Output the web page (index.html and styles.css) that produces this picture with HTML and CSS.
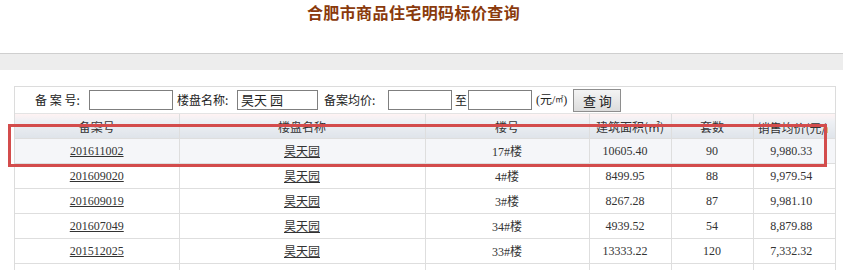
FILE: index.html
```html
<!DOCTYPE html>
<html lang="zh-CN">
<head>
<meta charset="utf-8">
<title>合肥市商品住宅明码标价查询</title>
<link rel="stylesheet" href="styles.css">
</head>
<body>
<div class="title">合肥市商品住宅明码标价查询</div>
<div class="band"></div>
<div class="panel">
  <div class="search">
    <span class="lbl lbl1">备 案 号:</span>
    <span class="inp inp1"></span>
    <span class="lbl lbl2">楼盘名称:</span>
    <span class="inp inp2">昊天 园</span>
    <span class="lbl lbl3">备案均价:</span>
    <span class="inp inp3"></span>
    <span class="lbl lbl4">至</span>
    <span class="inp inp4"></span>
    <span class="lbl unit">(元/<small>㎡</small>)</span>
    <span class="btn">查 询</span>
  </div>
  <table class="grid">
    <colgroup>
      <col class="c1"><col class="c2"><col class="c3"><col class="c4"><col class="c5"><col class="c6">
    </colgroup>
    <thead>
      <tr><th>备案号</th><th>楼盘名称</th><th>楼号</th><th>建筑面积(㎡)</th><th>套数</th><th class="clip"><span>销售均价(元/㎡)</span></th></tr>
    </thead>
    <tbody>
      <tr class="hl"><td><a href="#">201611002</a></td><td><a href="#">昊天园</a></td><td>17#楼</td><td class="num">10605.40</td><td>90</td><td class="num2">9,980.33</td></tr>
      <tr><td><a href="#">201609020</a></td><td><a href="#">昊天园</a></td><td>4#楼</td><td class="num">8499.95</td><td>88</td><td class="num2">9,979.54</td></tr>
      <tr><td><a href="#">201609019</a></td><td><a href="#">昊天园</a></td><td>3#楼</td><td class="num">8267.28</td><td>87</td><td class="num2">9,981.10</td></tr>
      <tr><td><a href="#">201607049</a></td><td><a href="#">昊天园</a></td><td>34#楼</td><td class="num">4939.52</td><td>54</td><td class="num2">8,879.88</td></tr>
      <tr><td><a href="#">201512025</a></td><td><a href="#">昊天园</a></td><td>33#楼</td><td class="num">13333.22</td><td>120</td><td class="num2">7,332.32</td></tr>
      <tr><td></td><td></td><td></td><td></td><td></td><td></td></tr>
    </tbody>
  </table>
</div>
<div class="mark"></div>
</body>
</html>
```
FILE: styles.css
```css
html, body {
  margin: 0;
  padding: 0;
  background: #fff;
  overflow: hidden;
}
body {
  width: 843px;
  height: 270px;
  position: relative;
  font-family: "Liberation Serif", "Noto Sans CJK SC", serif;
  font-size: 12px;
  color: #333;
}
.title {
  height: 53px;
  box-sizing: border-box;
  padding: 2px 16px 0 0;
  text-align: center;
  font-family: "Noto Sans CJK SC", sans-serif;
  font-weight: bold;
  font-size: 16px;
  line-height: 20px;
  color: #8a3a0c;
  letter-spacing: 0.4px;
}
.band {
  height: 16px;
  border-top: 1px solid #cfcfcf;
  background: #ededed;
}
.panel {
  margin: 16px 0 0 14px;
  width: 822px;
  box-sizing: border-box;
  border: 1px solid #dcdcdc;
  border-bottom: none;
}
.search {
  height: 26px;
  display: flex;
  align-items: center;
  border-bottom: 1px solid #e4e4e4;
  font-family: "Noto Sans CJK SC", sans-serif;
  font-size: 12px;
  color: #222;
}
.lbl { white-space: nowrap; line-height: 16px; }
.lbl1 { margin-left: 20px; width: 54px; }
.lbl2 { margin-left: 4px; width: 60px; }
.lbl3 { margin-left: 6px; width: 64px; }
.lbl4 { margin-left: 3px; width: 13px; }
.unit { margin-left: 4px; font-family: "Liberation Serif", "Noto Sans CJK SC", serif; font-size: 12px; }
.unit small { font-size: 8px; vertical-align: 2px; }
.inp {
  display: block;
  height: 20px;
  box-sizing: border-box;
  border: 1px solid #7f7f7f;
  background: #fff;
  line-height: 18px;
  padding-left: 3px;
  font-size: 13px;
  color: #222;
}
.inp1 { width: 84px; }
.inp2 { width: 81px; }
.inp3 { width: 64px; }
.inp4 { width: 64px; }
.btn {
  margin-left: 6px;
  width: 48px;
  height: 23px;
  box-sizing: border-box;
  border: 1px solid #8e8e8e;
  background: linear-gradient(#f4f4f4, #dcdcdc);
  text-align: center;
  line-height: 21px;
  font-size: 13px;
  color: #222;
}
.grid {
  width: 100%;
  table-layout: fixed;
  border-collapse: collapse;
}
.c1 { width: 164px; }
.c2 { width: 246px; }
.c3 { width: 164px; }
.c4 { width: 82px; }
.c5 { width: 82px; }
.c6 { width: auto; }
.grid th, .grid td {
  height: 24px;
  padding: 0;
  border: 1px solid #dedede;
  text-align: center;
  white-space: nowrap;
  overflow: hidden;
}
.grid tr > :first-child { border-left: none; }
.grid tr > :last-child { border-right: none; }
.grid thead th {
  border-top: none;
  font-weight: normal;
  font-family: "Noto Sans CJK SC", sans-serif;
  color: #333;
  background: linear-gradient(#fff3f3 0%, #eef0f4 30%, #dfe4ea 100%);
}
.grid th.clip { text-align: left; padding-left: 4px; }
.grid th.clip span {
  display: inline-block;
  width: 70px;
  overflow: hidden;
  vertical-align: middle;
}
.grid td { font-size: 12px; }
.grid td.num { padding-right: 10px; }
.grid td.num2 { padding-right: 6px; }
.grid tr.hl td { background: #f5f6f9; }
.grid a { color: #333; text-decoration: underline; }
.mark {
  position: absolute;
  left: 8px;
  top: 124px;
  width: 819px;
  height: 43px;
  box-sizing: border-box;
  border: 3px solid #d34c4c;
}
```
